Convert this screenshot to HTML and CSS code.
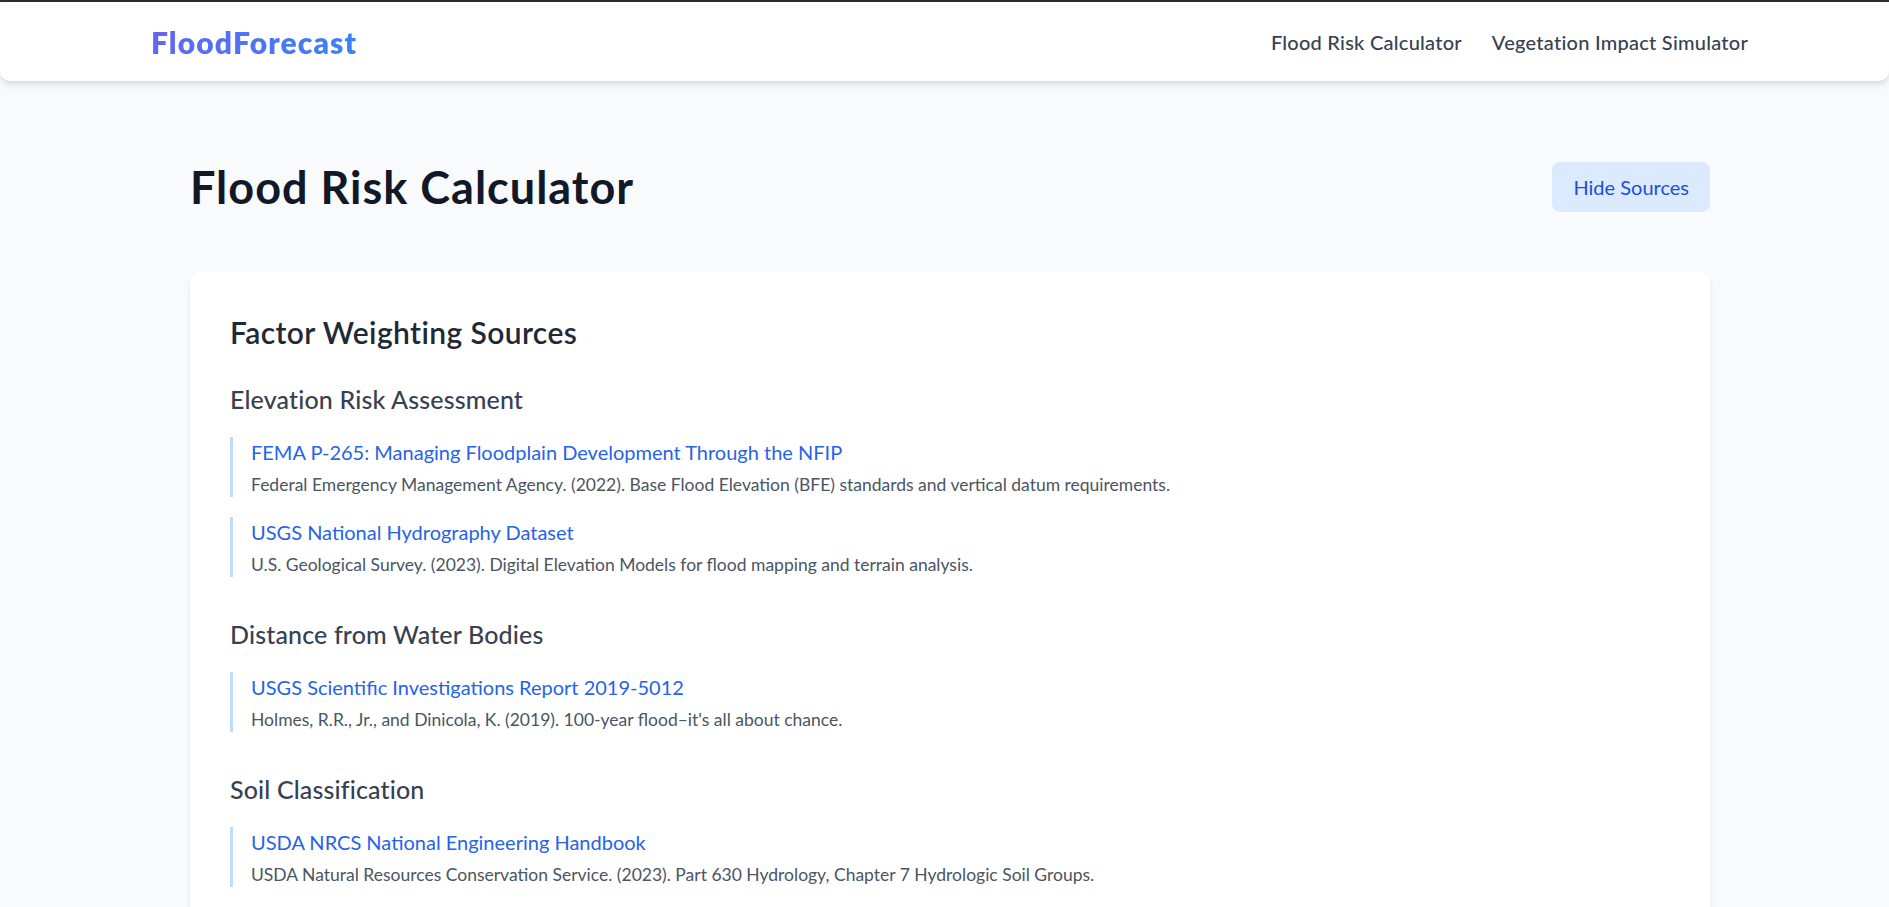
FILE: index.html
```html
<!DOCTYPE html>
<html lang="en">
<head>
<meta charset="utf-8">
<title>FloodForecast – Flood Risk Calculator</title>
<link rel="stylesheet" href="styles.css">
</head>
<body>
<div class="topline"></div>
<nav class="nav">
  <div class="nav-inner">
    <a class="logo" href="#">FloodForecast</a>
    <div class="nav-links">
      <a class="nav-link" href="#">Flood Risk Calculator</a>
      <a class="nav-link" href="#">Vegetation Impact Simulator</a>
    </div>
  </div>
</nav>
<main class="main">
  <div class="page-head">
    <h1 class="page-title">Flood Risk Calculator</h1>
    <button class="btn-sources" type="button">Hide Sources</button>
  </div>
  <section class="card">
    <h2 class="card-title">Factor Weighting Sources</h2>
    <div class="group">
      <h3 class="group-title">Elevation Risk Assessment</h3>
      <div class="items">
        <div class="item">
          <a class="item-link" href="#">FEMA P-265: Managing Floodplain Development Through the NFIP</a>
          <p class="item-desc">Federal Emergency Management Agency. (2022). Base Flood Elevation (BFE) standards and vertical datum requirements.</p>
        </div>
        <div class="item">
          <a class="item-link" href="#">USGS National Hydrography Dataset</a>
          <p class="item-desc">U.S. Geological Survey. (2023). Digital Elevation Models for flood mapping and terrain analysis.</p>
        </div>
      </div>
    </div>
    <div class="group">
      <h3 class="group-title">Distance from Water Bodies</h3>
      <div class="items">
        <div class="item">
          <a class="item-link" href="#">USGS Scientific Investigations Report 2019-5012</a>
          <p class="item-desc">Holmes, R.R., Jr., and Dinicola, K. (2019). 100-year flood–it's all about chance.</p>
        </div>
      </div>
    </div>
    <div class="group">
      <h3 class="group-title">Soil Classification</h3>
      <div class="items">
        <div class="item">
          <a class="item-link" href="#">USDA NRCS National Engineering Handbook</a>
          <p class="item-desc">USDA Natural Resources Conservation Service. (2023). Part 630 Hydrology, Chapter 7 Hydrologic Soil Groups.</p>
        </div>
      </div>
    </div>
  </section>
</main>
</body>
</html>
```
FILE: styles.css
```css
* { box-sizing: border-box; }
html, body { margin: 0; padding: 0; }
body {
  background: #f9fafb;
  font-family: "Lato", "Open Sans", "Liberation Sans", sans-serif;
  color: #111827;
  min-height: 100vh;
}
a { text-decoration: none; }
h1, h2, h3, p { margin: 0; }

.topline { height: 2px; background: #2e2e2e; }

.nav {
  background: #ffffff;
  height: 79px;
  border-radius: 0 0 10px 10px;
  box-shadow: 0 5px 8px -1px rgba(0,0,0,0.10), 0 2px 5px -2px rgba(0,0,0,0.10);
  position: relative;
}
.nav-inner {
  height: 100%;
  display: flex;
  align-items: center;
  justify-content: space-between;
  padding: 0 141px 0 151px;
}
.logo {
  font-size: 30px;
  font-weight: 800;
  line-height: 40px;
  letter-spacing: 1.1px;
  background: linear-gradient(90deg, #6366f1, #3b82f6);
  -webkit-background-clip: text;
  background-clip: text;
  color: transparent;
}
.nav-links { display: flex; gap: 30px; }
.nav-link {
  font-size: 20px;
  line-height: 30px;
  font-weight: 500;
  letter-spacing: 0.25px;
  color: #374151;
}

.main {
  width: 1520px;
  margin-left: 190px;
  padding-top: 81px;
}
.page-head {
  display: flex;
  align-items: center;
  justify-content: space-between;
  margin-bottom: 60px;
}
.page-title {
  font-size: 45px;
  line-height: 50px;
  font-weight: 700;
  letter-spacing: 1px;
  color: #111827;
}
.btn-sources {
  font-family: inherit;
  font-size: 20px;
  line-height: 30px;
  padding: 10px 21px;
  border: 0;
  border-radius: 8px;
  background: #dbeafe;
  color: #1d4ed8;
  cursor: pointer;
}

.card {
  background: #ffffff;
  border-radius: 10px;
  padding: 40px;
  box-shadow: 0 5px 8px -1px rgba(0,0,0,0.08), 0 2px 5px -2px rgba(0,0,0,0.08);
}
.card-title {
  font-size: 30px;
  line-height: 40px;
  font-weight: 600;
  letter-spacing: 0.4px;
  color: #1f2937;
  margin-bottom: 30px;
}
.group { margin-bottom: 40px; }
.group-title {
  font-size: 25px;
  line-height: 35px;
  font-weight: 500;
  letter-spacing: 0.15px;
  color: #374151;
  margin-bottom: 20px;
}
.items { display: flex; flex-direction: column; gap: 20px; }
.item {
  border-left: 3px solid #bfdbfe;
  padding-left: 18px;
}
.item-link {
  display: block;
  font-size: 20px;
  line-height: 30px;
  color: #2563eb;
}
.item-desc {
  margin-top: 5px;
  font-size: 17.5px;
  line-height: 25px;
  color: #4b5563;
}
```
